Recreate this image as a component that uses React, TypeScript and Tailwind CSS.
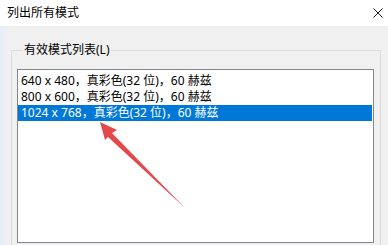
const font = { fontFamily: '"Noto Sans", "Noto Sans CJK SC", sans-serif' }

const modes = [
  '640 x 480，真彩色(32 位)，60 赫兹',
  '800 x 600，真彩色(32 位)，60 赫兹',
  '1024 x 768，真彩色(32 位)，60 赫兹',
]

export default function App() {
  const selected = 2

  return (
    <div className="relative w-[388px] h-[245px] overflow-hidden flex flex-col text-black" style={font}>
      {/* Title bar */}
      <div className="h-[26px] shrink-0 bg-white flex items-center justify-between pl-[7px] pr-[5px]">
        <span className="text-[12px] leading-none">列出所有模式</span>
        <svg className="w-[10px] h-[10px]" viewBox="0 0 10 10" aria-hidden>
          <path d="M0.5 0.5 L9.5 9.5 M9.5 0.5 L0.5 9.5" stroke="#1a1a1a" strokeWidth={1} fill="none" />
        </svg>
      </div>

      {/* Body */}
      <div className="flex-1 min-h-0 flex bg-[#f0f0f0]">
        <div className="w-[5px] shrink-0 bg-[#e8eef7]" />
        <div className="flex-1 pl-[6px] pr-[7px]">
          <fieldset className="mt-[15px] border border-[#dcdcdc] pl-[5px] pr-[6px] pt-[10px] pb-[20px]">
            <legend className="ml-[6px] px-[1px] text-[12px] leading-[18px]">有效模式列表(L)</legend>
            <div className="h-[174px] border border-[#828790] bg-white pt-[3px]">
              {modes.map((m, i) => (
                <div
                  key={m}
                  className={
                    i === selected
                      ? 'h-[16px] pl-[3px] mr-[1px] text-[12px] leading-[16px] whitespace-nowrap bg-[#0078d7] text-white'
                      : 'h-[16px] pl-[3px] mr-[1px] text-[12px] leading-[16px] whitespace-nowrap'
                  }
                >
                  {m}
                </div>
              ))}
            </div>
          </fieldset>
        </div>
      </div>

      {/* Red annotation arrow */}
      <svg className="absolute inset-0 pointer-events-none" width={388} height={245} viewBox="0 0 388 245" aria-hidden>
        <polygon
          points="100,122 117,130 112,133 185,208 108,137 105,140"
          fill="#e4484b"
        />
      </svg>
    </div>
  )
}
